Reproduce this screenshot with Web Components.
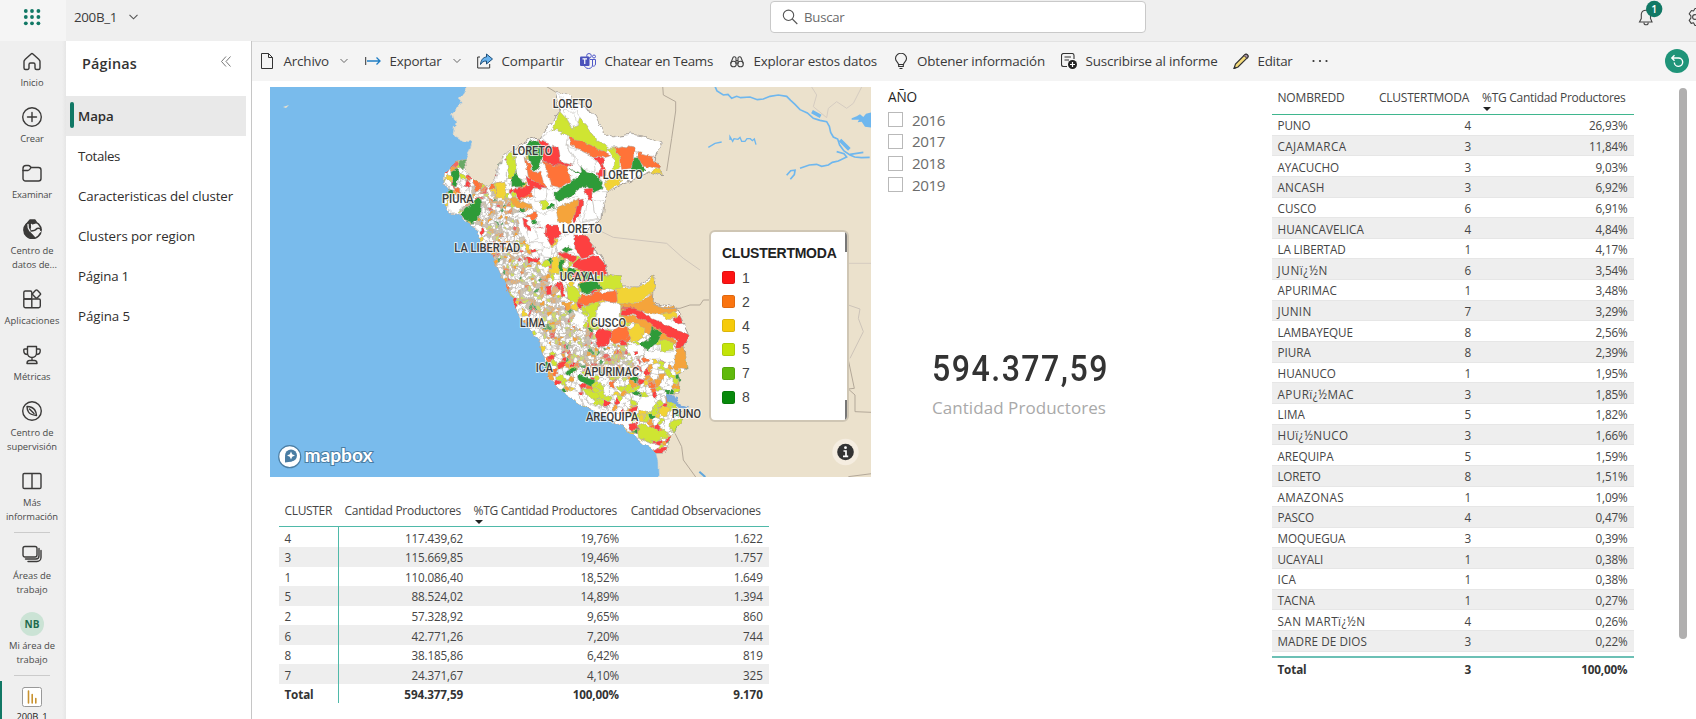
<!DOCTYPE html>
<html lang="es">
<head>
<meta charset="utf-8">
<title>200B_1</title>
<style>
html,body{margin:0;height:100%;overflow:hidden;background:#fff}
body{font-family:"Open Sans","Noto Sans",sans-serif;color:#333}
</style>
</head>
<body>
<report-app></report-app>
<script>
const define = (name, html, setup) => {
  const tpl = document.createElement('template');
  tpl.innerHTML = html;
  customElements.define(name, class extends HTMLElement {
    connectedCallback() {
      if (this.shadowRoot) return;
      this.attachShadow({ mode: 'open' }).append(tpl.content.cloneNode(true));
      if (setup) setup(this, this.shadowRoot);
    }
  });
};

/* Single line of text, tracked so that it fills the width given in "w";
   "narrow" condenses the glyphs by that factor first. */
customElements.define('fit-text', class extends HTMLElement {
  connectedCallback() {
    if (this.shadowRoot) return;
    const root = this.attachShadow({ mode: 'open' });
    root.innerHTML = '<style>:host{display:inline-block;white-space:pre;flex:none}span{display:inline-block;transform-origin:0 50%}</style><span><slot></slot></span>';
    requestAnimationFrame(() => this.fit());
    this.fit();
  }
  fit() {
    const w = +this.getAttribute('w'), k = +this.getAttribute('narrow') || 1;
    const s = this.shadowRoot.querySelector('span'), n = this.textContent.length;
    if (!w || !n) return;
    this.style.width = w + 'px';
    if (k !== 1) s.style.transform = `scaleX(${k})`;
    s.style.letterSpacing = '0';
    const nat = s.getBoundingClientRect().width;
    if (nat) s.style.letterSpacing = ((w + (k !== 1 ? 2 : 0) - nat) / n / k).toFixed(3) + 'px';
  }
});

const ICONS = {
  home: '<path d="M3 8.6 9.1 2.9a1.3 1.3 0 0 1 1.8 0L17 8.6c.6.5 1 1.200 1 2V17a1.500 1.500 0 0 1-1.500 1.500h-2A1.500 1.500 0 0 1 13 17v-3.500c0-.8-.7-1.500-1.500-1.500h-3c-.8 0-1.500.7-1.500 1.500V17a1.500 1.500 0 0 1-1.500 1.500h-2A1.500 1.500 0 0 1 2 17v-6.400c0-.8.4-1.500 1-2Z"/>',
  plus: '<circle cx="10" cy="10" r="9.300"/><path d="M10 5.500v9M5.500 10h9"/>',
  folder: '<path d="M1 5.500c0-2 1-3 3-3h2.500c1 0 1.500.5 2.500 2h7.500a2.500 2.500 0 0 1 2.500 2.500v8.500a2.500 2.500 0 0 1-2.500 2.500h-13A2.500 2.500 0 0 1 1 15.500Z"/><path d="M1 7.500h5c1.500 0 2-1 3-3"/>',
  hub: '<circle cx="10.500" cy="11" r="8.500" stroke-width="1.700"/><path d="M5.500 4 8 1h5l1.500 2.500-5 1.500L8 9.500l.5 4.500 4 4.500c-5.500.5-9.500-2-10-7-.2-3 1-5.500 3-7.500Z" fill="#3b3a39"/><path d="M6 5.500c-.5 4.500 2.500 9 8.500 9.500l4-2.500M9.500 5.500c0 3 2 5.500 4 6.500" stroke="#efefef" stroke-width="1.300"/><path d="M9 12c2 0 4 0 6-2.500 1.500-.5 3-.3 4 1"/>',
  apps: '<rect x="1.800" y="2" width="8" height="8" rx="1.500"/><path d="M1.800 10v7a1.700 1.700 0 0 0 1.700 1.700h6.300V10ZM9.800 10h7.200a1.300 1.300 0 0 1 1.300 1.300V17a1.700 1.700 0 0 1-1.700 1.700H9.800Z"/><rect x="11.300" y="1.800" width="6.400" height="6.400" rx="1.200" transform="rotate(45 14.500 5)" fill="#efefef"/>',
  cup: '<path d="M5.500 1.500h9V8c0 2.700-1.800 4.500-4.500 4.500S5.500 10.700 5.500 8ZM5.500 4H2.800c-.8 0-1 .4-1 1v1c0 2 1.700 3.500 4 3.500M14.500 4h2.700c.8 0 1 .4 1 1v1c0 2-1.700 3.500-4 3.500M10 12.500v3M5 18.500c0-2 1-3 2.500-3h5c1.500 0 2.500 1 2.500 3Z"/>',
  compass: '<circle cx="10" cy="10" r="9.300"/><path d="M5 5.500c4.500.2 6.500 1.500 7.800 3.500 1 1.500 1.500 3 1.700 5.500-4.500-.5-6.500-1-8-3.500C5.500 9.300 5 7.500 5 5.500ZM7.500 8l4.500 4.500"/>',
  book: '<path d="M2.300 2.500H10v15H2.300A1.300 1.300 0 0 1 1 16.200V3.800c0-.7.6-1.300 1.300-1.300ZM10 2.500h7.700c.7 0 1.300.6 1.300 1.300v12.400c0 .7-.6 1.300-1.300 1.300H10Z"/>',
  areas: '<rect x="1" y="2.500" width="14" height="10.500" rx="2"/><path d="M17 4.500v7.500a3 3 0 0 1-3 3H3.500M19 6.500v7a4 4 0 0 1-4 4H6"/>',
  report: '<rect x=".5" y=".5" width="19" height="19" rx="2" fill="#fff" stroke="#999" stroke-width="1"/><path d="M6.500 4v12M10.200 7.500V16M13.800 11.500V16" stroke="#c8922f" stroke-width="1.600"/>'
};

define('nav-item', `<style>
:host{display:block;position:relative;flex:none;padding:10px 0 7px;text-align:center;color:#4a4a4a}
.i{height:20px;margin-bottom:5px;display:flex;justify-content:center;align-items:center}
svg{width:20px;height:20px;fill:none;stroke:#3b3a39;stroke-width:1.400;stroke-linejoin:round;stroke-linecap:round;margin-right:2px}
.a{width:24px;height:24px;flex:none;border-radius:50%;background:#cbe3d5;color:#1f6b4d;font-weight:700;font-size:10px;line-height:24px;margin-right:2px}
.l{font-size:9.400px;line-height:14px;margin-right:2px}
:host([on]) .l{color:#222;margin-top:-2px}
:host([on])::before{content:"";position:absolute;left:0;top:4px;width:2px;height:60px;background:#117865}
</style><div class="i"></div><div class="l"><slot></slot></div>`, (h, r) => {
  const k = h.getAttribute('icon');
  r.querySelector('.i').innerHTML = ICONS[k] ? `<svg viewBox="0 0 20 20">${ICONS[k]}</svg>` : `<span class="a">${k}</span>`;
});

define('nav-rail', `<style>
:host{display:flex;flex-direction:column;width:66px;flex:none;background:linear-gradient(90deg,#efefef 62px,#e6e6e6 66px);overflow:hidden}
hr{flex:none;width:36px;height:1px;border:0;margin:1px 16px 1px 14px;background:#cbcbcb}
</style>
<nav-item icon="home"><fit-text w="23">Inicio</fit-text></nav-item>
<nav-item icon="plus"><fit-text w="23.500">Crear</fit-text></nav-item>
<nav-item icon="folder"><fit-text w="40">Examinar</fit-text></nav-item>
<nav-item icon="hub"><fit-text w="43">Centro de</fit-text><br>&nbsp; <fit-text w="45">datos de...</fit-text></nav-item>
<nav-item icon="apps"><fit-text w="55">Aplicaciones</fit-text></nav-item>
<nav-item icon="cup"><fit-text w="37">Métricas</fit-text></nav-item>
<nav-item icon="compass"><fit-text w="43">Centro de</fit-text><br><fit-text w="50">supervisión</fit-text></nav-item>
<nav-item icon="book"><fit-text w="18">Más</fit-text><br><fit-text w="52">información</fit-text></nav-item>
<hr>
<nav-item icon="areas"><fit-text w="38">Áreas de</fit-text><br><fit-text w="31">trabajo</fit-text></nav-item>
<nav-item icon="NB"><fit-text w="46">Mi área de</fit-text><br><fit-text w="31">trabajo</fit-text></nav-item>
<hr>
<nav-item icon="report" on><fit-text w="31">200B_1</fit-text></nav-item>`);

define('top-bar', `<style>
:host{display:flex;height:41px;flex:none;background:#efefef;box-sizing:border-box;align-items:flex-start;overflow:hidden}
.w{width:66px;height:41px;background:#f5f5f5;flex:none}
.n{width:704px;flex:none;display:flex;align-items:center;height:33px;padding-left:8px;box-sizing:border-box;font-size:13.400px;color:#3c3c3c}
.n svg{margin-left:12px}
.s{box-sizing:border-box;width:376px;height:32px;margin-top:1px;border:1px solid #c9c9c9;border-radius:4px;background:#fff;display:flex;align-items:center;padding-left:11px;gap:5px;font-size:13.200px;color:#6b6b6b;flex:none}
.r{flex:none;margin-left:490px;width:60px;height:41px}
svg{display:block;fill:none}
</style>
<div class="w"><svg width="66" height="41"><g id="d"></g></svg></div>
<div class="n"><fit-text w="43">200B_1</fit-text><svg width="9" height="6" stroke="#555" stroke-width="1.100"><path d="m.5.8 4 4 4-4"/></svg></div>
<div class="s"><svg width="17" height="16" stroke="#555" stroke-width="1.100"><circle cx="6.500" cy="6.300" r="5.200"/><path d="m10.300 10 5 5"/></svg><fit-text w="40.500">Buscar</fit-text></div>
<div class="r"><svg width="60" height="41" stroke="#444" stroke-width="1.100"><path d="M3.500 22h12.500l-1.500-3.500V14a4.700 4.700 0 0 0-9.200 0v4.500ZM8 22.700a2.100 2.100 0 0 0 4.200 0"/><circle cx="18.200" cy="9" r="8.200" fill="#117865" stroke="none"/><text x="18.200" y="13" text-anchor="middle" font-family="Open Sans" font-size="10.500" font-weight="600" fill="#fff" stroke="none">1</text><path d="M55.500 10.500 57.500 11 59 8.500h4v17h-4l-1.500-2.700-2.300.6-2-3 1.700-2.200v-2.400l-1.700-2Z" stroke-linejoin="round"/><circle cx="59" cy="17" r="2.400"/></svg></div>`,
(h, r) => {
  r.querySelector('#d').innerHTML = [25.8, 32, 38.4].flatMap(x => [11, 17, 23.3].map(y => `<circle cx="${x}" cy="${y}" r="1.900" fill="#117865"/>`)).join('');
});

define('page-tab', `<style>
:host{display:flex;align-items:center;height:40px;width:180px;box-sizing:border-box;padding-left:12px;font-size:13.300px;color:#2f2e2d;position:relative;flex:none}
:host([on]){background:#e9e9e9;font-weight:600}
:host([on])::before{content:"";position:absolute;left:4px;top:6px;width:4px;height:26px;border-radius:2px;background:#117865}
div{margin-top:-1px}
</style><div><slot></slot></div>`);

define('pages-pane', `<style>
:host{display:flex;flex-direction:column;width:186px;box-sizing:border-box;flex:none;background:#fff;border-right:1.500px solid #c6c6c6}
.h{height:55px;box-sizing:border-box;padding:12px 20px 0 16px;display:flex;justify-content:space-between;font-size:14.400px;font-weight:600;line-height:21px}
svg{margin-top:3px}
</style>
<div class="h"><fit-text w="55">Páginas</fit-text><svg width="10" height="11" fill="none" stroke="#777"><path d="m5 .5-4.500 5 4.500 5M9.500.5 5 5.500l4.500 5"/></svg></div>
<page-tab on><fit-text w="35.500">Mapa</fit-text></page-tab>
<page-tab><fit-text w="42">Totales</fit-text></page-tab>
<page-tab><fit-text w="155">Caracteristicas del cluster</fit-text></page-tab>
<page-tab><fit-text w="117">Clusters por region</fit-text></page-tab>
<page-tab><fit-text w="51">Página 1</fit-text></page-tab>
<page-tab><fit-text w="52">Página 5</fit-text></page-tab>`);

const TOOLS = {
  file: '<path d="M2.500.500h7l4 4v11h-11ZM9.500.500v4h4" stroke="#333"/>',
  exp: '<path d="M.700 4v8" stroke="#333"/><path d="M2 8h13M11.500 4.500 15 8l-3.500 3.500" stroke="#1f7dc4" stroke-width="1.300"/>',
  share: '<path d="M3 4H.700v11h12v-4" stroke="#333"/><path d="M9.500 1 15.500 6l-6 5V8C6.500 8 5 9 3.500 11.500 4 7 6 4.200 9.500 4Z" fill="#69b3ee" stroke="#1d4e79"/>',
  teams: '<circle cx="9" cy="2.800" r="2.300" stroke="#5059c9"/><circle cx="14" cy="3.500" r="1.500" stroke="#5059c9"/><path d="M10 6.500h5.500V11c0 2-2 2.500-3 2M12.500 6.500V12c0 2-1.500 3.500-4 3.500S5 14 4.500 13" stroke="#5059c9"/><rect y="3.500" width="9.500" height="9.500" rx="1" fill="#4b53bc"/><path d="M2.500 5.800h4.500M4.750 5.800V11" stroke="#fff" stroke-width="1.200"/>',
  bino: '<g stroke="#444" stroke-width="1.100"><circle cx="4.500" cy="11" r="2.800"/><circle cx="11.500" cy="11" r="2.800"/><path d="M1.700 10.500 4 4.500c.5-1 2.500-1 3 .5v6M14.300 10.500 12 4.500c-.5-1-2.500-1-3 .5v6M7 7.500h2"/></g>',
  bulb: '<path d="M5.500 11.500c0-2-3-3-3-6a5.500 5.200 0 0 1 11 0c0 3-3 4-3 6ZM5.700 11.500v2h4.600v-2M6.500 15.500h3" stroke="#333" stroke-width="1.100"/>',
  sub: '<path d="M6 13.500H2.500a2 2 0 0 1-2-2v-9a2 2 0 0 1 2-2H11a2 2 0 0 1 2 2V6M3.500 4H10M3.500 7H8" stroke="#333" stroke-width="1.100"/><circle cx="11.500" cy="11.500" r="4.500" fill="#222"/><path d="M11.500 9v5M9 11.500h5" stroke="#fff" stroke-width="1.200"/>',
  pen: '<path d="M1 15.500 2.500 11 12 1.500c1.500-1.200 4 1 2.700 2.800L5 14Z" fill="#f6dc7c" stroke="#333" stroke-width="1.200"/><path d="M11 2.500 14 5.500l1-1.500c.5-1.500-1.500-3.500-3-2.500Z" fill="#a88fa5" stroke="#333"/><path d="m.5 16 .9-3 2 2Z" fill="#333"/>'
};
define('tool-item', `<style>
:host{display:flex;align-items:center;flex:none;height:40px;gap:8.500px;font-size:13.400px;color:#3a3a3a}
svg{flex:none;fill:none}
.c{margin-left:2.500px}
</style><svg id="i" width="16" height="16" viewBox="0 0 16 16"></svg><slot></slot>`, (h, r) => {
  h.style.width = h.getAttribute('span') + 'px';
  r.querySelector('#i').innerHTML = TOOLS[h.getAttribute('icon')];
  if (h.hasAttribute('menu')) r.innerHTML += '<svg class="c" width="8" height="6" stroke="#666"><path d="m.5 1 3.500 3.500L7.500 1"/></svg>';
});
define('tool-bar', `<style>
:host{display:flex;align-items:center;height:40px;flex:none;background:#f4f4f4;padding-left:7px;box-shadow:inset 0 1px #e2e2e2;box-sizing:border-box}
.m{flex:none;width:353px;margin-left:1px}
svg{display:block;flex:none}
</style>
<tool-item icon="file" span="106" menu><fit-text w="45.500">Archivo</fit-text></tool-item>
<tool-item icon="exp" span="112" menu><fit-text w="52">Exportar</fit-text></tool-item>
<tool-item icon="share" span="103"><fit-text w="62.500">Compartir</fit-text></tool-item>
<tool-item icon="teams" span="149"><fit-text w="108.500">Chatear en Teams</fit-text></tool-item>
<tool-item icon="bino" span="163.500"><fit-text w="123.500">Explorar estos datos</fit-text></tool-item>
<tool-item icon="bulb" span="168.500"><fit-text w="128">Obtener información</fit-text></tool-item>
<tool-item icon="sub" span="172"><fit-text w="132">Suscribirse al informe</fit-text></tool-item>
<tool-item icon="pen" span="78"><fit-text w="35">Editar</fit-text></tool-item>
<svg class="m" height="4" fill="#333"><circle cx="1.500" cy="2" r="1.100"/><circle cx="8" cy="2" r="1.100"/><circle cx="14.500" cy="2" r="1.100"/></svg>
<svg width="24" height="24"><circle cx="12" cy="12" r="12" fill="#1f9479"/><path d="M7.500 9h6a4.200 4.200 0 1 1-4.200 4.500M9.500 6.300 6.800 9l2.700 2.700" fill="none" stroke="#fff" stroke-width="1.400"/></svg>`);

define('peru-map', `<style>
:host{display:block;position:relative;width:601px;height:390px;overflow:hidden;background:#79bbec}
svg{display:block}
.lb text{font:500 12px Roboto,sans-serif;fill:#3a3a3a;stroke:#fffb;stroke-width:2.200px;paint-order:stroke;stroke-linejoin:round}
.z path{stroke:#aeaaa5;stroke-width:1.400}
.ln{fill:none;stroke:#b3a899;stroke-width:3}
</style>
<svg width="601" height="390" viewBox="270 87 601 390">
<defs>
<filter id="rough" filterUnits="userSpaceOnUse" x="200" y="40" width="760" height="500"><feTurbulence type="fractalNoise" baseFrequency=".11" numOctaves="3" seed="4"/><feDisplacementMap in="SourceGraphic" scale="7" xChannelSelector="R" yChannelSelector="G"/></filter>
<clipPath id="pc"><path id="pp" d="M465 159 455 163 445 173 444 182 449 190 444 201 448 210 458 216 470 222 476 232 483 245 492 255 500 272 507 288 515 305 517 313 528 327 540 343 545 360 548 377 567 395 583 405 600 413 617 423 632 433 643 443 657 453 663 453 670 443 671 433 682 420 680 412 672 402 668 394 678 394 680 382 678 374 687 370 685 347 689 335 682 320 675 307 653 303 655 275 640 286 622 286 620 277 606 275 607 267 595 248 583 234 590 227 602 218 604 202 608 192 620 185 650 172 663 176 655 160 662 142 647 137 630 134 613 138 603 132 595 115 582 106 568 97 555 92 560 112 540 138 530 140 512 150 502 156 495 181 488 187 478 182 468 173Z"/></clipPath></defs>
<g filter="url(#rough)">
<rect x="240" y="60" width="700" height="460" fill="#79bbec"/>
<path fill="#ebe1cc" stroke="#dcd6cc" stroke-width=".6" d="M469 66V86L461 97 460 105 452 112 455 122 453 135 465 141 472 142 470 150 465 159 455 163 445 173 444 182 449 190 444 201 448 210 458 216 470 222 476 232 483 245 492 255 500 272 507 288 515 305 517 313 528 327 540 343 545 360 548 377 567 395 583 405 600 413 617 423 632 433 643 443 657 453 659 463 660 500H902V66Z"/>
<path fill="#79bbec" d="m464 145 6-4 2 2-4 4-3 1Z"/>
<use href="#pp" fill="#fff" stroke="#a39c94" stroke-width="1"/>
<g clip-path="url(#pc)"><g id="cells" stroke="#b4b1ad" stroke-width=".5"></g>
<g class="z" id="z7" transform="translate(480 85) scale(.33333)"></g>
<g class="z" id="z8" transform="translate(500 280) scale(.33333)"></g></g>
<path fill="#79a9dc" transform="translate(500 280) scale(.33333)" d="M498 342 520 345 532 365 568 380 555 388 520 374 505 362Z"/>
</g>
<path fill="#ebe1cc" d="m283 107 6-2-3 3Z"/>
<g class="ln" transform="translate(480 85) scale(.33333)"><path d="M195 2 225 20M548 2 550 30 587 50 587 78 575 160 560 258"/><path stroke="#cfc6bb" d="M330 435 365 440 400 457 560 475 610 520 660 555"/></g>
<g class="ln" transform="translate(500 280) scale(.33333)"><path d="M460 72 490 85 540 85 570 75 600 75 610 60 640 60M525 460 545 500 550 540 590 595"/></g>
<g fill="none" stroke="#6fb7ee" stroke-width="6" transform="translate(690 85) scale(.33333)">
<path class="ln" style="stroke:#d5ccc1" d="M365 6 380 30 370 65 410 98 415 70 440 50 470 70 490 55 515 6M475 535H545"/><path class="ln" d="M475 660 510 672 505 700 520 740 480 820" style="stroke:#cdc4b9"/><path class="ln" d="M475 825 493 910 475 912 495 930V980L545 982M475 1175 545 1166"/>
<path stroke-width="5" d="m75 4 6 14 19 12 14-2 11 12 15-6 12 4 28-2 22 8 18-2 20-8 25-4 25 4 12 12 13 12 15 16 22 10 18 16 20 6 20 4 8 14 4 18 8 14 13 6 6 18 13 18 18 12 14 6 20 2 25-1"/><path stroke-width="11" d="m366 80 26 14M450 165l28 28"/><path stroke-width="5" d="m440 200 22 6 8 10-25 12-18 4-12 8-20 4-15-6-22 2-28 10M480 208l40-6M318 255l-16 2-12 14M315 257l-2 12-12 14"/><path stroke-width="4" d="m55 187 20-12 20-4M120 165v-10l8 14 4-8 12 2 6-6 5 12h10l6-8 10 0 6 6 6-5 5 17"/><path fill="#6fb7ee" stroke="none" d="m485 100 15-6 10-6 10 8 8-10 17-4v46l-20-3-10-15-12 2 4-8-22 0Z"/><path stroke="#5fa6dc" d="m28 1160 18 16"/></g>
<g class="lb" id="lb"></g>
<g><circle cx="289.700" cy="456.700" r="11" fill="#fff" stroke="#4a7da3" stroke-width="1.200"/><circle cx="291" cy="455.500" r="6" fill="#4a7da3"/><path fill="#4a7da3" d="m285 456 0 6.500 7-1Z"/><path fill="#fff" d="m291 451.500 1.200 2.800 2.800 1.200-2.800 1.200-1.200 2.800-1.200-2.800-2.800-1.200 2.800-1.200Z"/>
<text x="304.500" y="462" textLength="68" lengthAdjust="spacingAndGlyphs" style="font:700 19px Lato,sans-serif;fill:#fff;stroke:#4a7da3;stroke-width:2px;paint-order:stroke">mapbox</text>
<circle cx="845.500" cy="452" r="13.200" fill="#f5ede0"/><circle cx="845.500" cy="452" r="8.300" fill="#333"/><circle cx="845.500" cy="447.700" r="1.400" fill="#fff"/><path d="M843.500 451h2.500v5M843 456.300h5.200" stroke="#fff" stroke-width="1.700" fill="none"/></g>
</svg><slot></slot>`, (h, r) => {
  const R = '#fd4141', O = '#ff7339', G = '#2d9b37', L = '#cfe532', Y = '#f2d335', T = '#f5a43b', W = '#fff';
  const draw = (id, list) => r.querySelector(id).innerHTML = list.map(([f, p]) => `<path fill="${f}" d="M${p}Z"/>`).join('');
  draw('#z7', [
    [W, '225 20 265 35 300 60 345 90 370 140 400 160 450 148 500 155 550 172 520 225 470 205 460 190 430 183 385 190 345 160 325 130 300 98 280 75 255 50'],
    [W, '250 75 262 72 285 95 292 122 275 128 258 100'],
    [W, '185 158 215 135 240 140 262 158 258 185 275 205 282 238 243 230 235 190 200 172'],
    [W, '258 180 290 192 330 210 345 230 350 262 305 250 275 205'],
    [W, '66 213 80 240 78 285 48 295'], [W, '102 205 135 190 145 275 125 285 110 265'],
    [W, '110 400 150 395 165 430 200 425 198 450 215 485 205 510 150 480 125 450'],
    [W, '145 345 200 325 225 320 230 372 190 390 150 365'],
    [W, '160 310 205 312 200 345 165 350'], [W, '205 312 240 308 225 345 200 345'],
    [W, '225 485 245 450 285 440 285 490 232 510'],
    [W, '300 360 340 320 385 320 372 350 365 400 300 415'],
    [W, '322 350 340 345 350 400 310 410'], [W, '340 345 372 350 365 400 350 400'], [W, '225 350 290 335 290 345 230 372'],
    [W, '140 440 165 430 175 460 150 470'], [W, '150 470 190 470 190 495 150 490'], [W, '190 490 215 485 210 515 185 512'],
    [L, '240 80 258 100 275 128 292 122 300 98 325 130 345 160 385 185 375 200 340 185 300 170 265 158 240 140 215 135'],
    [R, '175 163 200 172 235 190 243 230 282 238 275 243 230 240 190 232 185 200'],
    [G, '140 178 175 168 188 200 185 230 165 258 150 235 145 215'],
    [L, '82 208 98 198 106 240 110 275 90 282 78 240'],
    [O, '135 215 150 240 165 262 180 255 190 290 210 312 170 300 145 275'],
    [O, '190 232 230 240 262 240 275 285 240 308 215 302 205 270 195 250'],
    [R, '137 272 160 290 175 298 205 312 160 308 145 330 120 345 102 325 115 308 145 305'],
    [G, '98 290 112 265 125 285 135 300 115 305 98 308'],
    [Y, '48 295 70 288 78 305 72 345 50 335'], [T, '80 340 120 345 150 358 155 375 110 365'],
    [L, '180 348 200 345 208 370 188 375'], [G, '198 368 215 358 225 370 205 376'],
    [O, '262 158 300 168 345 185 380 205 395 215 370 222 330 210 290 190 268 175'],
    [G, '225 320 255 302 280 285 300 268 262 248 305 262 302 240 320 262 350 270 355 285 368 290 362 310 340 320 325 305 300 310 270 335 235 350 225 340'],
    [O, '400 190 430 183 462 190 458 250 425 255 420 215'], [L, '380 190 400 190 420 215 418 250 400 258 400 215'],
    [O, '470 205 520 215 520 225 548 255 520 250 490 240 475 220'], [G, '462 215 475 215 490 245 500 255 470 262 458 250'],
    [Y, '375 290 395 280 440 278 410 300 385 318 368 305'], [Y, '505 262 535 252 552 258 552 270'],
    [R, '340 212 372 228 365 240 345 230'], [R, '370 232 375 250 375 275 355 285 355 262'], [R, '312 312 335 310 338 350 325 345'],
    [T, '230 372 292 342 288 380 270 418 240 410'], [R, '292 345 310 342 300 390 285 415 280 400'],
    [R, '198 420 235 420 245 450 225 460 215 485 195 450'],
    [R, '285 450 320 450 345 490 340 510 300 520 285 490'], [R, '285 525 350 512 380 545 372 570 310 560 280 545'],
    [R, '130 400 145 410 155 445 140 440'], [R, '232 510 260 502 285 515 278 535 250 520'], [R, '140 520 180 515 178 528 145 532'],
    [G, '248 495 262 484 278 490 262 503'], [G, '235 530 250 522 250 560 236 562'], [Y, '215 520 232 512 236 560 215 570'],
    [L, '365 572 420 575 430 610 365 610']]);
  draw('#z8', [
    [L, '285 -15 365 -15 370 25 345 30 305 20'], [Y, '350 25 370 25 440 15 465 -15 460 40 440 45 400 75 350 75'],
    [G, '240 15 255 5 295 5 305 20 275 35 245 38'], [O, '230 75 245 42 290 38 350 32 352 65 300 65 265 78'],
    [L, '200 15 235 35 245 45 230 75 205 60'], [L, '255 80 295 70 285 120 300 155 270 150'],
    [T, '350 75 400 75 440 50 460 40 460 72 500 85 530 78 530 95 480 105 440 95 380 88'],
    [W, '295 75 330 65 362 75 360 120 350 150 300 145 290 110'],
    [T, '365 100 440 120 500 160 530 185 500 205 480 185 440 160 400 130 370 125'],
    [R, '365 85 400 85 430 92 455 115 490 130 530 148 570 165 550 205 525 205 530 180 490 160 440 125 400 105 362 100'],
    [Y, '480 105 525 92 530 115 500 112'], [R, '515 118 530 112 538 100 550 130 535 132'],
    [O, '330 155 370 135 395 150 380 180 340 190'], [Y, '380 150 410 130 435 145 430 170 400 188'],
    [W, '385 195 430 190 440 220 400 240 380 215'], [W, '430 215 480 210 525 215 525 250 480 240 440 240'],
    [G, '420 190 445 175 455 142 485 160 470 190 440 210 430 205'], [L, '480 180 520 185 520 210 480 215'],
    [T, '525 208 558 200 560 270 525 265'], [R, '285 160 300 148 335 160 330 190 300 200 288 190'],
    [R, '358 182 375 178 382 195 368 200'], [R, '398 210 412 207 415 220 405 228'],
    [R, '135 20 155 15 158 40 140 42'], [R, '175 18 188 14 195 45 182 52'], [T, '190 65 215 68 215 90 195 88'],
    [W, '225 90 250 100 255 130 245 150 220 120'],
    [W, '180 345 205 328 235 335 250 375 200 360'], [W, '235 335 260 365 300 385 300 405 250 375'], [W, '300 385 350 400 345 430 300 405'], [W, '350 400 390 410 400 430 395 455 345 430'],
    [W, '420 350 455 345 468 375 440 400 415 385'],
    [G, '195 275 225 263 230 270 205 288'], [G, '235 280 262 295 285 300 280 320 255 312 238 302'], [R, '145 235 168 222 165 238 150 245'], [R, '168 252 200 240 195 258 172 270'],
    [T, '145 280 160 278 165 300 150 300'], [L, '245 330 275 330 300 350 290 362 255 345'], [O, '330 305 345 300 350 325 330 328'],
    [R, '385 385 418 378 410 392 392 395'], [R, '385 430 410 425 412 445 392 448'], [G, '392 452 412 448 412 458'],
    [L, '412 440 440 435 475 455 500 440 500 470 450 485 415 470'], [W, '410 470 450 487 478 495 460 515 410 490'],
    [R, '470 505 502 500 498 520 470 522 458 510'], [Y, '480 380 505 380 500 410 480 400'], [L, '510 430 540 415 540 430 515 455'], [W, '492 420 515 415 512 450 495 450']]);

  /* District mosaic: seeded scatter of sites, each drawn as its Voronoi cell. */
  let seed = 20231;
  const rnd = () => (seed = (seed * 1664525 + 1013904223) >>> 0) / 4294967296;
  const axis = [[478, 205], [500, 218], [510, 260], [530, 285], [560, 330], [590, 355], [625, 362]];
  const dist = (x, y) => Math.min(...axis.slice(1).map(([bx, by], i) => {
    const [ax, ay] = axis[i], dx = bx - ax, dy = by - ay;
    const t = Math.max(0, Math.min(1, ((x - ax) * dx + (y - ay) * dy) / (dx * dx + dy * dy)));
    return Math.hypot(x - ax - t * dx, y - ay - t * dy);
  }));
  const pts = [];
  for (let i = 0; i < 26000; i++) {
    const y = 155 + rnd() * 300, x = 440 + rnd() * 255;
    const west = 470 + (y - 215) * .77, off = x - west;
    if (off < -60 && y > 225 || x > 530 + Math.max(0, y - 225) * 1.1 || x > 545 && y < 225) continue;
    const d = dist(x, y), m = d < 17 ? 2.2 : 4;
    if (pts.every(p => Math.abs(p[0] - x) > m || Math.abs(p[1] - y) > m || Math.hypot(p[0] - x, p[1] - y) > m)) pts.push([x, y, d]);
  }
  const out = [];
  for (const [x, y, d] of pts) {
    let poly = [[x - 7, y - 7], [x + 7, y - 7], [x + 7, y + 7], [x - 7, y + 7]];
    for (const [u, v] of pts) {
      const a = u - x, b = v - y;
      if ((!a && !b) || Math.abs(a) > 14 || Math.abs(b) > 14) continue;
      const c = (a * (x + u) + b * (y + v)) / 2, next = [];
      poly.forEach((p, i) => {
        const q = poly[(i + 1) % poly.length], s = a * p[0] + b * p[1] - c, t = a * q[0] + b * q[1] - c;
        if (s <= 0) next.push(p);
        if (s * t < 0) { const k = s / (s - t); next.push([p[0] + (q[0] - p[0]) * k, p[1] + (q[1] - p[1]) * k]); }
      });
      poly = next;
    }
    const k = rnd(), south = y > 330;
    const tone = d < 17
      ? (k < .4 ? W : k < .58 ? '#cfc4b2' : k < .7 ? '#e3b27c' : k < .8 ? '#cfdc6a' : k < .86 ? T : k < .92 ? '#ee6a62' : k < .96 ? '#f0905c' : '#5aa862')
      : (k < (south ? .46 : .54) ? W : k < .66 ? L : k < .74 ? Y : k < .82 ? T : k < .91 ? R : k < .95 ? O : G);
    out.push(`<path fill="${tone}" d="M${poly.map(p => p[0].toFixed(1) + ' ' + p[1].toFixed(1)).join(' ')}Z"/>`);
  }
  r.querySelector('#cells').innerHTML = out.join('') +
    `<path fill="${G}" d="M459 216 466 208 472 205 480 197 482 205 480 216 474 222Z"/><path fill="${G}" d="m452 172 5-3 2 7-3 10-4-2Z"/><path fill="#6aa866" d="m459 160 8-2v9l-4 2-4-4Z"/><path fill="#f26a63" d="m453 165 4-3 3 3-5 4Z"/><path fill="${W}" d="m449 208 8 7 3-6 8-6-2-6-17 4Z"/><path fill="${O}" d="m474 178 6 1v11l-4 1-3-7ZM465 175l6 2-1 4-5-3Z"/>`;
  r.querySelector('#lb').innerHTML = [['LORETO', 552.7, 107.7, 39.6], ['LORETO', 512.3, 155.300, 40], ['LORETO', 602.7, 179.300, 40], ['LORETO', 562, 232.900, 40], ['UCAYALI', 559.7, 280.700, 43.600], ['PIURA', 442, 203.300, 31.700], ['LA LIBERTAD', 454.3, 251.900, 66], ['LIMA', 520, 326.900, 25], ['ICA', 535.7, 371.500, 17], ['CUSCO', 590.7, 326.500, 35.300], ['APURIMAC', 584.3, 376, 54.700], ['AREQUIPA', 586, 420.500, 52.300], ['PUNO', 671.7, 417.500, 29.300]]
    .map(([t, x, y, w]) => `<text x="${x}" y="${y}" textLength="${w}" lengthAdjust="spacingAndGlyphs">${t}</text>`).join('');
});

define('legend-row', `<style>
:host{display:flex;align-items:center;height:23.850px;gap:7px;font:14px "Liberation Sans",sans-serif;color:#444}
i{width:13px;height:13px;border-radius:2.500px;box-shadow:inset 0 0 0 .5px #0003}
</style><i></i><slot></slot>`, (h, r) => { r.querySelector('i').style.background = h.getAttribute('color'); });

define('map-legend', `<style>
:host{position:absolute;left:439px;top:143px;width:140px;height:191.500px;box-sizing:border-box;border:2px solid #cfc6b4;border-radius:6px;background:#fff;padding:11px 0 0 11px;overflow:hidden}
h3{margin:0;font:700 14px/20px "Liberation Sans",sans-serif;color:#222;height:23px;white-space:nowrap}
b{position:absolute;right:0;width:2.500px;background:#777;height:20px}
</style><h3><fit-text w="114.500">CLUSTERTMODA</fit-text></h3>
<legend-row color="#fd1414">1</legend-row><legend-row color="#fa7410">2</legend-row><legend-row color="#f6cb0a">4</legend-row><legend-row color="#c3e408">5</legend-row><legend-row color="#60b90c">7</legend-row><legend-row color="#08890c">8</legend-row>
<b style="top:0"></b><b style="bottom:0"></b>`);

define('year-slicer', `<style>
:host{display:block;padding-top:6px}
h4{margin:0 0 2px;font-weight:400;font-size:13.600px;line-height:20px;height:20px;color:#252423}
label{display:flex;align-items:center;height:21.650px;gap:9px;font-size:15.200px;color:#6c6c6c}
i{box-sizing:border-box;width:15px;height:15px;border:1px solid #b9b9b9}
</style><h4><fit-text w="29">AÑO</fit-text></h4>
<label><i></i><fit-text w="33">2016</fit-text></label><label><i></i><fit-text w="33">2017</fit-text></label><label><i></i><fit-text w="33">2018</fit-text></label><label><i></i><fit-text w="33">2019</fit-text></label>`);

define('kpi-card', `<style>
:host{display:block;margin:151px 0 0 44px}
.v{font:500 36.500px/44px Roboto,sans-serif;color:#333;height:50px}
.l{font-size:17px;line-height:22px;color:#a9a9a9}
</style><div class="v"><fit-text w="175" narrow=".88">594.377,59</fit-text></div><div class="l"><fit-text w="174">Cantidad Productores</fit-text></div>`);

/* Striped grid. Cells are right-aligned except the first column. */
const gridCss = `
:host{display:block;color:#454545;font-size:11.700px;position:relative}
.r{display:grid;align-items:center;height:var(--rh)}
.r span{text-align:right;letter-spacing:-.15px;white-space:nowrap}
.r span:first-child{text-align:left}
.b:nth-child(even){background:#eee}
.t{font-weight:700;color:#333}
.hd{position:relative;font-size:12px}
.ar{position:absolute;border:4px solid transparent;border-top:4px solid #222;border-bottom:0;height:0;width:0}`;
const grid = (name, css, head, rows, total, names) => define(name, `<style>${gridCss}${css}</style>
<div class="r hd">${head.map(([t, w]) => `<span><fit-text w="${w}">${t}</fit-text></span>`).join('')}<i class="ar"></i></div>
<div class="bd">${rows.map(c => `<div class="r b">${c.map((v, i) => `<span>${names && !i ? `<fit-text w="${names[v]}">${v}</fit-text>` : v}</span>`).join('')}</div>`).join('')}</div>
<div class="r t">${total.map(v => `<span>${v}</span>`).join('')}</div>`);

grid('cluster-table', `
:host{width:489.500px;--rh:19.550px;margin:18px 0 0 9px}
.r{grid-template-columns:60px 124px 156px 143.700px;box-sizing:border-box}
.r span:first-child{padding-left:5.500px}
.hd{height:32px;border-bottom:1.500px solid #4fb9a9}
.hd span:nth-child(n+2){padding-right:2px}
.ar{left:196px;top:24.500px}
.bd{padding-top:.500px}
.b,.t{position:relative;top:0}
:host::after{content:"";position:absolute;left:59px;top:32px;bottom:0;width:1px;background:#4fb9a9}
.b span,.t span{padding-top:1px}`,
[['CLUSTER', 47.5], ['Cantidad Productores', 116.5], ['%TG Cantidad Productores', 143.5], ['Cantidad Observaciones', 130]],
[['4', '117.439,62', '19,76%', '1.622'], ['3', '115.669,85', '19,46%', '1.757'], ['1', '110.086,40', '18,52%', '1.649'], ['5', '88.524,02', '14,89%', '1.394'], ['2', '57.328,92', '9,65%', '860'], ['6', '42.771,26', '7,20%', '744'], ['8', '38.185,86', '6,42%', '819'], ['7', '24.371,67', '4,10%', '325']],
['Total', '594.377,59', '100,00%', '9.170']);

const bad = '\u00ef\u00bf\u00bd';
const N = { PUNO: 33, CAJAMARCA: 69, AYACUCHO: 61.5, ANCASH: 47, CUSCO: 39, HUANCAVELICA: 86.5, 'LA LIBERTAD': 68, ['JUN' + bad + 'N']: 50.5, APURIMAC: 59.5, JUNIN: 34, LAMBAYEQUE: 75.5, PIURA: 33.5, HUANUCO: 58.5, ['APUR' + bad + 'MAC']: 76.5, LIMA: 27.5, ['HU' + bad + 'NUCO']: 71, AREQUIPA: 56, LORETO: 43, AMAZONAS: 66.5, PASCO: 36.5, MOQUEGUA: 68, UCAYALI: 45.5, ICA: 18.5, TACNA: 37.5, ['SAN MART' + bad + 'N']: 88, 'MADRE DE DIOS': 89.5 };
const V = '4 26,93|3 11,84|3 9,03|3 6,92|6 6,91|4 4,84|1 4,17|6 3,54|1 3,48|7 3,29|8 2,56|8 2,39|1 1,95|3 1,85|5 1,82|3 1,66|5 1,59|8 1,51|1 1,09|4 0,47|3 0,39|1 0,38|1 0,38|1 0,27|4 0,26|3 0,22'.split('|').map(s => s.split(' '));
grid('region-table', `
:host{width:361.500px;--rh:20.650px;flex:none;margin-top:1px}
.r{grid-template-columns:100px 99px 156.500px}
.r span:first-child{padding-left:5.500px}
.b{box-shadow:inset 0 -1px #e6e6e6}
.hd{height:32px;border-bottom:1.500px solid #3fb68e}
.hd span{margin-top:-1px}
.hd span:nth-child(n+2){padding-right:2px}
.ar{left:211px;top:25px}
.t{margin-top:4.500px;border-top:2px solid #6cc0b5;height:21px}`,
[['NOMBREDD', 67], ['CLUSTERTMODA', 90], ['%TG Cantidad Productores', 143.5]],
Object.keys(N).map((n, i) => [n, V[i][0], V[i][1] + '%']), ['Total', '3', '100,00%'], N);

define('report-canvas', `<style>
:host{display:flex;flex:1;background:#fff;min-height:0}
.a{width:601px;padding:6px 0 0 18px;flex:none}
.m{width:384px;padding-left:17px;flex:none}
.s{flex:none;width:8px;height:551px;border-radius:4px;background:#b0afaf;margin:7px 0 0 45px}
</style><div class="a"><peru-map><map-legend></map-legend></peru-map><cluster-table></cluster-table></div>
<div class="m"><year-slicer></year-slicer><kpi-card></kpi-card></div><region-table></region-table><div class="s"></div>`);

define('report-app', `<style>
:host{display:flex;flex-direction:column;width:1696px;height:719px;overflow:hidden}
.b,.c{display:flex;flex:1;min-height:0}.c{flex-direction:column;min-width:0}
</style><top-bar></top-bar><div class="b"><nav-rail></nav-rail><pages-pane></pages-pane><div class="c"><tool-bar></tool-bar><report-canvas></report-canvas></div></div>`);
</script>
</body>
</html>
